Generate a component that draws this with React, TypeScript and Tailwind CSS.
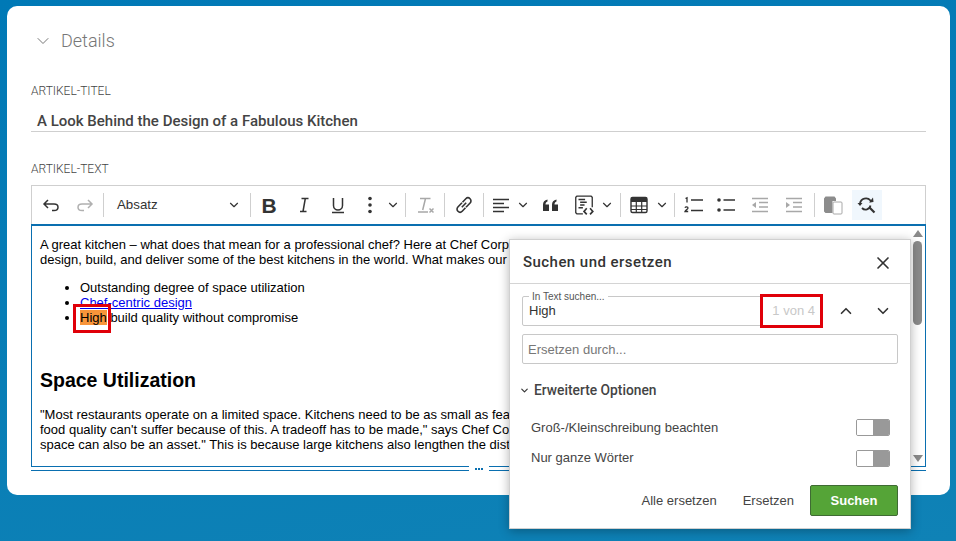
import { ChevronDown, ChevronUp, X } from 'lucide-react'
import type { ReactNode } from 'react'

function Sep() {
  return <div className="w-px h-6 bg-[#cfcfcf] shrink-0" />
}

function Tool({ w, children }: { w: string; children: ReactNode }) {
  return <div className={`${w} h-[30px] shrink-0 flex items-center justify-center text-[#333]`}>{children}</div>
}

function Chev() {
  return <ChevronDown className="w-3.5 h-3.5 shrink-0 text-[#333]" strokeWidth={2} />
}

function Icon({ children, size = 20 }: { children: ReactNode; size?: number }) {
  return (
    <svg width={size} height={size} viewBox="0 0 20 20" fill="none" stroke="currentColor" strokeWidth="1.5" className="shrink-0">
      {children}
    </svg>
  )
}

function Toggle() {
  return (
    <div className="w-[34px] h-[17px] flex rounded-[2px] border border-[#999] overflow-hidden">
      <div className="w-4 bg-white" />
      <div className="flex-1 bg-[#999]" />
    </div>
  )
}

function Toolbar() {
  return (
    <div className="h-[39px] pl-[2px] flex items-center border-x border-t border-[#cfcfcf] font-['Roboto',sans-serif]">
      <Tool w="w-[34px]">
        <Icon><path d="M7 5 3 9l4 4M3 9h10c2.6 0 4 1.400 4 3.200S15.600 15.500 13 15.500h-2" /></Icon>
      </Tool>
      <Tool w="w-[34px]">
        <div className="text-[#b0b0b0]">
          <Icon><path d="m13 5 4 4-4 4M17 9H7c-2.600 0-4 1.400-4 3.200s1.400 3.300 4 3.300h2" /></Icon>
        </div>
      </Tool>
      <div className="w-px shrink-0" />
      <Sep />
      <div className="w-[146px] shrink-0 pl-[13px] pr-[9px] flex items-center justify-between font-['Liberation_Sans',sans-serif] text-[13.300px] text-[#333]">
        <span>Absatz</span>
        <Chev />
      </div>
      <Sep />
      <Tool w="w-[36px]"><span className="font-['Liberation_Sans',sans-serif] font-bold text-[21px] leading-none">B</span></Tool>
      <Tool w="w-[34px]">
        <Icon><path d="M7.500 3.500h7M6 16.500h6.500M11.300 3.500 9 16.500" /></Icon>
      </Tool>
      <Tool w="w-[34px]">
        <Icon><path d="M5.500 3v7.500a4.500 4.500 0 0 0 9 0V3M4 17.500h12" /></Icon>
      </Tool>
      <Tool w="w-[30px]">
        <svg width="6" height="18" viewBox="0 0 6 18" fill="#333" className="shrink-0">
          <circle cx="3" cy="2.500" r="1.800" />
          <circle cx="3" cy="9" r="1.800" />
          <circle cx="3" cy="15.500" r="1.800" />
        </svg>
      </Tool>
      <Tool w="w-[16px]"><Chev /></Tool>
      <div className="w-[4px] shrink-0" />
      <Sep />
      <Tool w="w-[38px]">
        <div className="text-[#a8a8a8]">
          <Icon><path d="M5 3.500h10.500M10.500 3.500 7.700 15M3 17h10M14.500 13.500l4 4M18.500 13.500l-4 4" /></Icon>
        </div>
      </Tool>
      <Sep />
      <Tool w="w-[38px]">
        <svg width="18" height="18" viewBox="0 0 18 18" fill="none" stroke="currentColor" strokeWidth="1.600" className="shrink-0">
          <path d="M7.500 6.200 10.800 2.800a3 3 0 0 1 4.300 4.200L11 11.300" />
          <path d="M10.500 11.800 7.200 15.200A3 3 0 0 1 2.900 11L7 6.700" />
          <path d="M6.800 11.200 11.200 6.800" />
        </svg>
      </Tool>
      <Sep />
      <Tool w="w-[34px]">
        <Icon><path d="M2 4.500h16M2 8.500h11M2 12.500h16M2 16.500h11" /></Icon>
      </Tool>
      <Tool w="w-[10px]"><Chev /></Tool>
      <Tool w="w-[46px]">
        <Icon>
          <path fill="currentColor" stroke="none" d="M2 16V9.500C2 7 3.500 5 6.500 4.500v2C5 7 4.500 8 4.500 9.500H8V16H2ZM11 16V9.500C11 7 12.500 5 15.500 4.500v2C14 7 13.500 8 13.500 9.500H17V16h-6Z" />
        </Icon>
      </Tool>
      <Tool w="w-[20px]">
        <Icon size={22}>
          <path strokeWidth="1.200" d="M9 18H3.500L2.500 17V3L3.500 2h13l1 1v9" />
          <path strokeWidth="1.200" d="M5 5h6M6.500 7.500h6M6.500 10h4M5 12.500h4" />
          <path strokeWidth="1.500" d="m12.500 13-2.500 2.800 2.500 2.700M15.500 13l2.500 2.800-2.500 2.700" />
        </Icon>
      </Tool>
      <Tool w="w-[26px]"><Chev /></Tool>
      <Sep />
      <Tool w="w-[36px]">
        <Icon>
          <rect x="2" y="2.500" width="16" height="15" rx="1.500" strokeWidth="1.400" />
          <path fill="currentColor" stroke="none" d="M2 3h16v4H2z" />
          <path strokeWidth="1.200" d="M2 11h16M2 14.500h16M7.300 7v10M12.700 7v10" />
        </Icon>
      </Tool>
      <Tool w="w-[10px]"><Chev /></Tool>
      <div className="w-[7px] shrink-0" />
      <Sep />
      <Tool w="w-[38px]">
        <svg width="20" height="20" viewBox="0 0 20 20" fill="none" stroke="currentColor" className="shrink-0">
          <path strokeWidth="1.300" d="M1.500 3.500 3 2.800V7.500M1 12.800c.5-1.300 3-1.300 3 .3 0 1.200-2.500 1.800-3 3.400h3.200" />
          <path strokeWidth="1.500" d="M7 5h12M7 15.500h12" />
        </svg>
      </Tool>
      <Tool w="w-[26px]">
        <svg width="20" height="20" viewBox="0 0 20 20" fill="none" stroke="currentColor" className="shrink-0">
          <circle cx="3" cy="5" r="1.800" fill="currentColor" stroke="none" />
          <circle cx="3" cy="15" r="1.800" fill="currentColor" stroke="none" />
          <path strokeWidth="1.500" d="M7.500 5H19M7.500 15H19" />
        </svg>
      </Tool>
      <Tool w="w-[42px]">
        <div className="text-[#a8a8a8]">
          <Icon>
            <path d="M2 3.500h16M9 7.500h9M9 12h9M2 16.500h16" />
            <path fill="currentColor" stroke="none" d="M6 7v6L2 10z" />
          </Icon>
        </div>
      </Tool>
      <Tool w="w-[26px]">
        <div className="text-[#a8a8a8]">
          <Icon>
            <path d="M2 3.500h16M9 7.500h9M9 12h9M2 16.500h16" />
            <path fill="currentColor" stroke="none" d="M2 7v6l4-3z" />
          </Icon>
        </div>
      </Tool>
      <div className="w-[7px] shrink-0" />
      <Sep />
      <Tool w="w-[36px]">
        <svg width="20" height="20" viewBox="0 0 20 20" className="shrink-0">
          <path fill="#8c8c8c" d="M1 3.500 2.500 1.500h9L13 3.500V6H9.500v12H2.500L1 16.500z" />
          <rect x="10" y="7" width="9" height="12" rx="1" fill="#fff" stroke="#a8a8a8" strokeWidth="1" />
        </svg>
      </Tool>
      <div className="w-px shrink-0" />
      <div className="w-[30px] h-[30px] shrink-0 flex items-center justify-center bg-[#f0f7fd] text-[#333]">
        <svg width="20" height="20" viewBox="0 0 20 20" fill="none" stroke="currentColor" strokeWidth="1.800" className="shrink-0">
          <path d="M3 8.500a6 6 0 0 1 10.500-3l1 1.500M13.500 10.500a5 5 0 0 1-8.500 2.500" />
          <path fill="currentColor" stroke="none" d="M.500 8h5l-2.500 3zM12 7.500l4.500-.5-.5-4.500z" />
          <path strokeWidth="2.200" d="m12.500 12.500 5 5" />
        </svg>
      </div>
    </div>
  )
}

function EditorBody() {
  return (
    <div className="relative h-[242px] border-x border-t-2 border-[#0a6fb0] overflow-hidden bg-white">
      <div className="pl-2 pt-[11px] font-['Liberation_Sans',sans-serif] text-[13px] leading-[15px] text-black whitespace-nowrap">
        <p>A great kitchen – what does that mean for a professional chef? Here at Chef Corp</p>
        <p>design, build, and deliver some of the best kitchens in the world. What makes our</p>
        <ul className="list-disc pl-10 mt-[13px]">
          <li>Outstanding degree of space utilization</li>
          <li><a className="text-[#0000ee] underline">Chef-centric design</a></li>
          <li>
            <span className="relative bg-[#f8953a]">
              High
              <span className="absolute left-[-7px] right-[-4px] top-[-6px] bottom-[-8px] border-[3px] border-[#e00009]" />
            </span>{' '}
            build quality without compromise
          </li>
        </ul>
        <h2 className="mt-[43px] text-[19.500px] leading-[24px] font-bold">Space Utilization</h2>
        <div className="mt-[15px]">
          <p>"Most restaurants operate on a limited space. Kitchens need to be as small as fea</p>
          <p>food quality can't suffer because of this. A tradeoff has to be made," says Chef Co</p>
          <p>space can also be an asset." This is because large kitchens also lengthen the dist</p>
        </div>
      </div>
      {/* scrollbar */}
      <div className="absolute right-0 top-0 bottom-0 w-[15px] bg-white flex flex-col items-center">
        <div className="mt-[4px] w-0 h-0 border-x-[5px] border-x-transparent border-b-[7px] border-b-[#8a8a8a]" />
        <div className="mt-[4px] w-[9px] h-[84px] rounded-full bg-[#8a8a8a]" />
        <div className="mt-auto mb-[4px] w-0 h-0 border-x-[5px] border-x-transparent border-t-[7px] border-t-[#8a8a8a]" />
      </div>
    </div>
  )
}

function EditorFooter() {
  return (
    <div className="h-[5px] flex bg-white">
      <div className="w-[438px] border-y border-[#0a6fb0]" />
      <div className="w-[20px] flex items-center justify-center gap-px">
        <div className="w-[2px] h-[2px] bg-[#0a6fb0]" />
        <div className="w-[2px] h-[2px] bg-[#0a6fb0]" />
        <div className="w-[2px] h-[2px] bg-[#0a6fb0]" />
      </div>
      <div className="flex-1 border-y border-[#0a6fb0]" />
    </div>
  )
}

function SearchDialog() {
  return (
    <div className="absolute left-[502px] top-[233px] w-[402px] h-[290px] bg-white border border-[#d0d0d0] shadow-[0_2px_10px_rgba(0,0,0,0.3)] font-['Liberation_Sans',sans-serif] text-[#444]">
      <div className="h-[44px] pl-[13px] pr-[17px] pt-[2px] flex items-center justify-between border-b border-[#d4d4d4]">
        <span className="font-['Roboto',sans-serif] font-medium text-[15px] text-[#333] tracking-[0.45px]">Suchen und ersetzen</span>
        <X className="w-[20px] h-[20px] text-[#333]" strokeWidth={2} />
      </div>
      <div className="pl-[12px] pr-[12px] pt-[12px]">
        <div className="flex items-center">
          <div className="relative w-[300px] h-[30px] pl-[6px] flex items-center justify-between border border-[#c8c8c8] rounded-[2px]">
            <span className="absolute left-[6px] top-[-6px] px-[3px] bg-white text-[10px] leading-[11px] text-[#555]">In Text suchen...</span>
            <span className="text-[13px] text-[#333]">High</span>
            <span className="relative mr-[6px] text-[13px] text-[#c8c8c8]">
              1 von 4
              <span className="absolute left-[-12px] right-[-8px] top-[-7px] bottom-[-7px] border-[3px] border-[#e00009]" />
            </span>
          </div>
          <ChevronUp className="ml-[15px] w-[18px] h-[18px] text-[#333]" strokeWidth={2.200} />
          <ChevronDown className="ml-[19px] w-[18px] h-[18px] text-[#333]" strokeWidth={2.200} />
        </div>
        <div className="mt-[8px] h-[30px] pl-[5px] pt-[2px] flex items-center border border-[#c8c8c8] rounded-[2px] text-[13px] text-[#777]">Ersetzen durch...</div>
        <div className="mt-[18px] h-[16px] flex items-center gap-[4px]">
          <ChevronDown className="w-[11px] h-[11px] text-[#333] -ml-[3px]" strokeWidth={2.500} />
          <span className="font-['Roboto',sans-serif] font-medium text-[13.800px] leading-[16px] text-[#444]">Erweiterte Optionen</span>
        </div>
        <div className="mt-[21px] pl-[9px] pr-[8px] flex items-center justify-between text-[13px] leading-[17px]">
          <span>Groß-/Kleinschreibung beachten</span>
          <Toggle />
        </div>
        <div className="mt-[14px] pl-[9px] pr-[8px] flex items-center justify-between text-[13px] leading-[17px]">
          <span className="-translate-y-px">Nur ganze Wörter</span>
          <Toggle />
        </div>
        <div className="mt-[18px] flex items-center justify-end text-[13px]">
          <span>Alle ersetzen</span>
          <span className="ml-[26px]">Ersetzen</span>
          <div className="ml-[16px] w-[88px] h-[31px] flex items-center justify-center rounded-[2px] border border-[#3f6b33] bg-[#55a437] text-white font-bold">Suchen</div>
        </div>
      </div>
    </div>
  )
}

export default function App() {
  return (
    <div className="w-[956px] h-[541px] overflow-hidden pt-[6px] pl-[7px] bg-[linear-gradient(170deg,#0079b6,#0f82b6)]">
      <div className="relative w-[943px] h-[489px] pl-[24px] pr-[24px] rounded-[10px] bg-white font-['Roboto',sans-serif]">
        <div className="pt-[24px] pl-[2px] flex items-center gap-[8px] text-[#777]">
          <ChevronDown className="w-[20px] h-[20px]" strokeWidth={1.200} />
          <span className="text-[18px] leading-[22px] font-light">Details</span>
        </div>
        <div className="mt-[32px] text-[12px] leading-[14px] font-light text-[#444]">ARTIKEL-TITEL</div>
        <div className="mt-[7px] h-[27px] pl-[6px] pt-[7px] flex items-center border-b border-[#cfcfcf] text-[15px] font-medium text-[#444]">A Look Behind the Design of a Fabulous Kitchen</div>
        <div className="mt-[30px] text-[12px] leading-[14px] font-light text-[#444]">ARTIKEL-TEXT</div>
        <div className="mt-[9px]">
          <Toolbar />
          <EditorBody />
          <EditorFooter />
        </div>
        <SearchDialog />
      </div>
    </div>
  )
}
